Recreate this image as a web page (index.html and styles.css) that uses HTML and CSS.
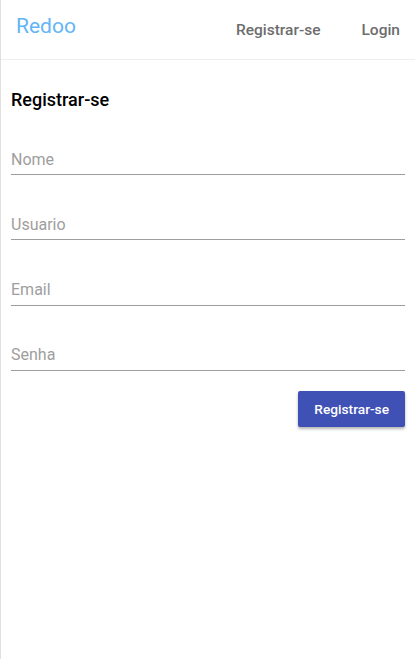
FILE: index.html
```html
<!DOCTYPE html>
<html lang="pt">
<head>
<meta charset="utf-8">
<title>Redoo</title>
<link rel="stylesheet" href="styles.css">
</head>
<body>
<div class="app">
  <header class="navbar">
    <a class="brand" href="#">Redoo</a>
    <nav class="links">
      <a href="#" class="link">Registrar-se</a>
      <a href="#" class="link">Login</a>
    </nav>
  </header>
  <main class="content">
    <h2 class="title">Registrar-se</h2>
    <form class="form">
      <div class="field"><input type="text" placeholder="Nome"></div>
      <div class="field"><input type="text" placeholder="Usuario"></div>
      <div class="field"><input type="email" placeholder="Email"></div>
      <div class="field"><input type="password" placeholder="Senha"></div>
      <div class="actions"><button type="button" class="btn">Registrar-se</button></div>
    </form>
  </main>
</div>
</body>
</html>
```
FILE: styles.css
```css
html, body {
  margin: 0;
  padding: 0;
  height: 100%;
  background: #fff;
  font-family: Roboto, "Liberation Sans", sans-serif;
}
.app {
  min-height: 100%;
  border-left: 1px solid #e0e0e0;
  box-sizing: border-box;
}
.navbar {
  height: 60px;
  border-bottom: 1px solid #eeeeee;
  display: flex;
  align-items: center;
  justify-content: space-between;
  padding: 0 15px 0 15px;
  box-sizing: border-box;
}
.brand {
  color: #64b5f6;
  font-size: 21px;
  text-decoration: none;
  margin-top: -7px;
}
.links {
  display: flex;
  gap: 41px;
  margin-top: 1px;
}
.link {
  color: #6d6d6d;
  font-size: 15.5px;
  font-weight: 500;
  text-decoration: none;
}
.content {
  padding: 0 10px;
}
.title {
  margin: 29px 0 0 0;
  font-size: 18px;
  font-weight: 500;
  color: #000;
  line-height: 22px;
}
.form {
  display: flex;
  flex-direction: column;
}
.field {
  margin-top: 34.33px;
}
.field:first-child {
  margin-top: 33px;
}
.field input {
  display: block;
  width: 100%;
  box-sizing: border-box;
  border: none;
  border-bottom: 1px solid #9e9e9e;
  height: 31px;
  padding: 0;
  font-family: Roboto, "Liberation Sans", sans-serif;
  font-size: 16px;
  outline: none;
  background: transparent;
  color: #222;
}
.field input::placeholder {
  color: #9e9e9e;
}
.actions {
  display: flex;
  justify-content: flex-end;
  margin-top: 20px;
}
.btn {
  background: #3f51b5;
  color: #fff;
  border: none;
  border-radius: 2px;
  height: 36px;
  padding: 0 16px;
  font-family: Roboto, "Liberation Sans", sans-serif;
  font-size: 13.7px;
  font-weight: 500;
  box-shadow: 0 2px 3px rgba(0,0,0,0.3);
}
```
